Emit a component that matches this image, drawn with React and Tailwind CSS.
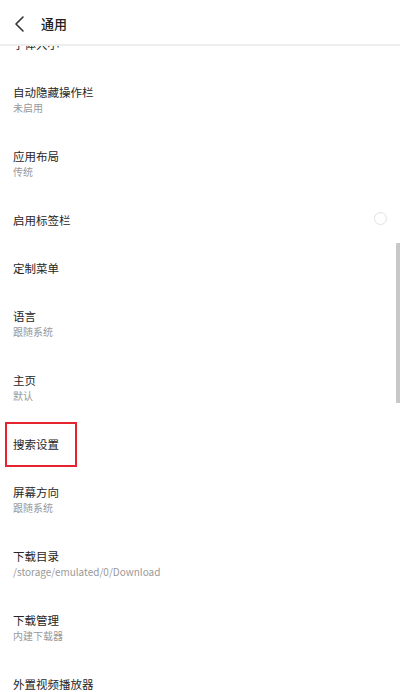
import React from 'react';

const rows = [
    { title: '字体大小' },
    { title: '自动隐藏操作栏', sub: '未启用' },
    { title: '应用布局', sub: '传统' },
    { title: '启用标签栏', radio: true },
    { title: '定制菜单' },
    { title: '语言', sub: '跟随系统' },
    { title: '主页', sub: '默认' },
    { title: '搜索设置', marked: true },
    { title: '屏幕方向', sub: '跟随系统' },
    { title: '下载目录', sub: '/storage/emulated/0/Download' },
    { title: '下载管理', sub: '内建下载器' },
    { title: '外置视频播放器' },
];

const font = { fontFamily: '"Noto Sans CJK SC", Roboto, "Noto Sans", sans-serif' };

const Row = ({ row }) => (
    <div
        className={`relative flex items-center justify-between pl-[13px] pr-[13px] ${row.sub ? 'h-[64px]' : 'h-[48px]'}`}
    >
        <div className="flex flex-col">
            <span className="text-[11.5px] leading-[16px] text-[#262626]">{row.title}</span>
            {row.sub && <span className="text-[10px] leading-[16px] text-[#999999]">{row.sub}</span>}
        </div>
        {row.radio && (
            <span className="w-[13px] h-[13px] rounded-full border-[1.5px] border-[#e2e2e2] -mt-[4px]" />
        )}
        {row.marked && (
            <span className="absolute left-[5px] top-[2px] w-[72px] h-[45px] border-2 border-[#e5242f]" />
        )}
    </div>
);

const App = () => {
    return (
        <div className="relative w-[400px] h-[692px] bg-white overflow-hidden flex flex-col" style={font}>
            {/* Header */}
            <div className="relative z-10 h-[46px] shrink-0 bg-white border-b-2 border-[#eeeeee] flex items-center">
                <svg width="40" height="44" viewBox="0 0 40 44" className="shrink-0">
                    <path d="M23 17 L16 24 L23 31" fill="none" stroke="#333" strokeWidth="1.6" strokeLinecap="round" strokeLinejoin="round" />
                </svg>
                <span className="text-[13px] leading-[16px] font-medium text-[#222222] mt-[3px] ml-[1px]">通用</span>
            </div>

            {/* List */}
            <div className="flex-1 overflow-hidden">
                <div className="-mt-[26px]">
                    {rows.map((row) => (
                        <Row key={row.title} row={row} />
                    ))}
                </div>
            </div>

            {/* Scrollbar */}
            <div className="absolute right-0 top-[243px] w-[4px] h-[160px] bg-[#c8c8c8] rounded-l-[1px]" />
        </div>
    );
};

export default App;
